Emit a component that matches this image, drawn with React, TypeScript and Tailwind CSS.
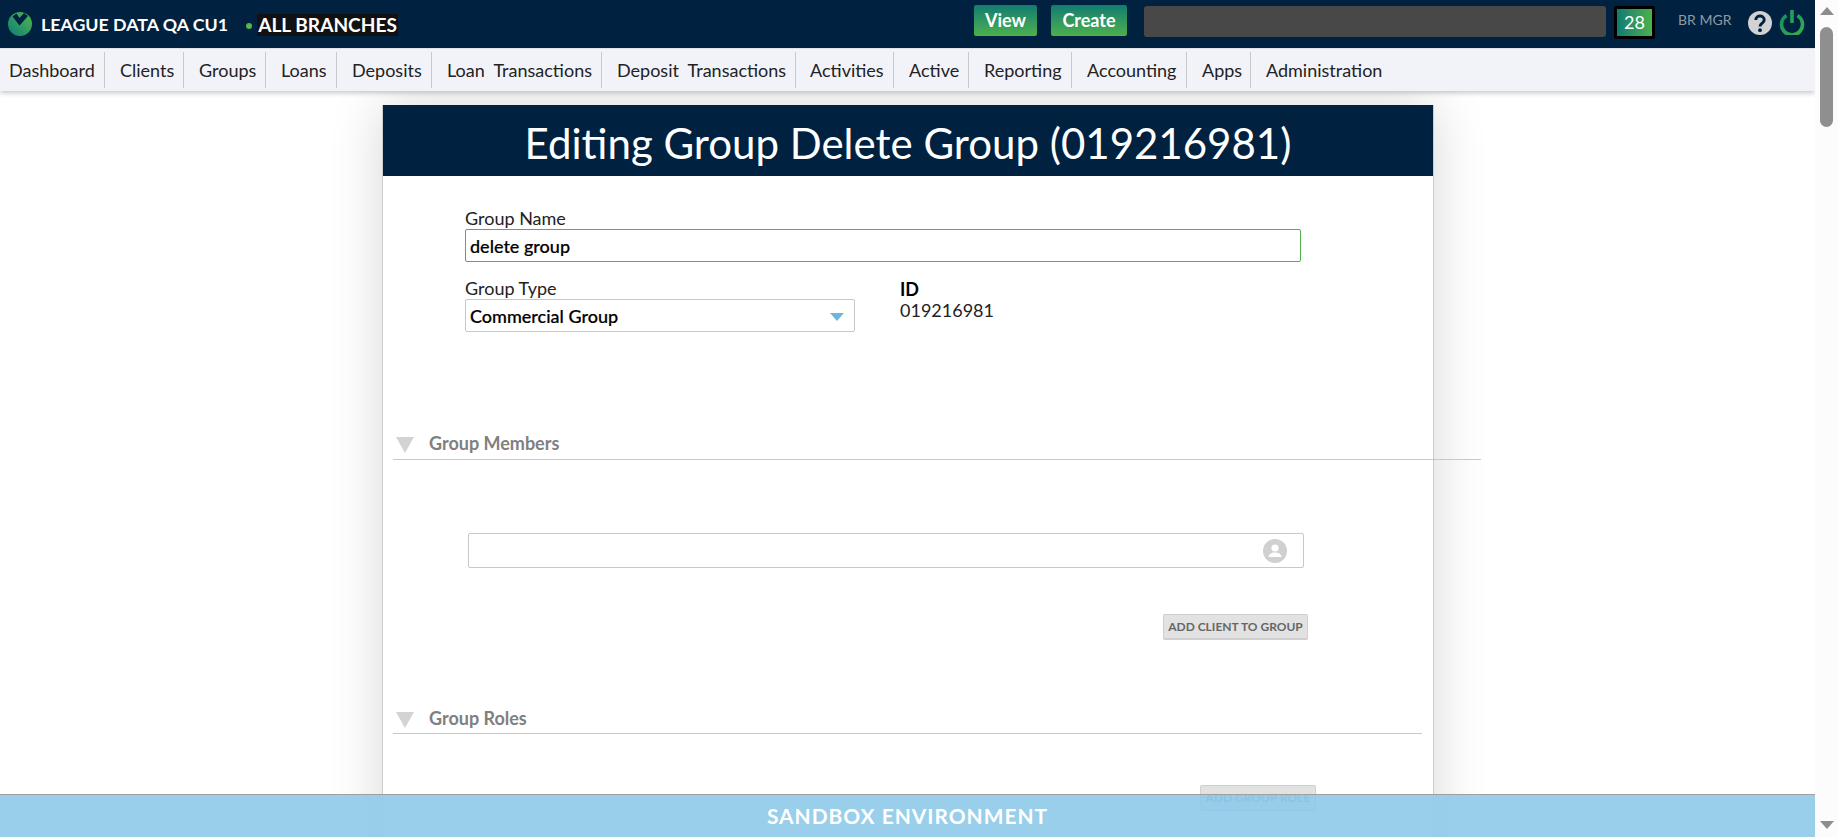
import React from "react";

const navItems: [string, string][] = [
  ["Dashboard", "w-[105px] pl-[9px]"],
  ["Clients", "w-[79px] pl-[15px]"],
  ["Groups", "w-[82px] pl-[15px]"],
  ["Loans", "w-[71px] pl-[15px]"],
  ["Deposits", "w-[95px] pl-[15px]"],
  ["Loan  Transactions", "w-[170px] pl-[15px]"],
  ["Deposit  Transactions", "w-[194px] pl-[15px]"],
  ["Activities", "w-[98px] pl-[14px]"],
  ["Active", "w-[75px] pl-[15px]"],
  ["Reporting", "w-[103px] pl-[15px]"],
  ["Accounting", "w-[115px] pl-[15px]"],
  ["Apps", "w-[64px] pl-[15px]"],
  ["Administration", "pl-[15px]"],
];

function Logo() {
  return (
    <svg width="24" height="26" viewBox="0 0 24 26" className="shrink-0">
      <defs>
        <linearGradient id="lg" x1="0" y1="1" x2="1" y2="0">
          <stop offset="0" stopColor="#0e7c7b" />
          <stop offset="1" stopColor="#52b848" />
        </linearGradient>
      </defs>
      <circle cx="12" cy="13" r="12" fill="url(#lg)" />
      <path d="M4.5 5.5 L11.5 14.5 L20 5 L16 2 L11.5 7 L8.5 2.5 Z" fill="#002240" />
    </svg>
  );
}

function Triangle() {
  return <span className="w-0 h-0 border-l-[9px] border-r-[9px] border-t-[16px] border-l-transparent border-r-transparent border-t-[#d3d3d3] mt-1" />;
}

function SectionHead({ title, lineClass }: { title: string; lineClass: string }) {
  return (
    <div className={`flex items-center h-[32px] pl-[3px] border-b border-[#c8c8c8] ${lineClass}`}>
      <Triangle />
      <span className="ml-[15px] text-[18px] font-bold text-[#808080] leading-none">{title}</span>
    </div>
  );
}

function GrayButton({ children, className }: { children: React.ReactNode; className: string }) {
  return (
    <button className={`h-[26px] flex items-center justify-center whitespace-nowrap rounded-[2px] bg-[#e2e2e2] border border-[#cfcfcf] border-b-2 text-[12px] font-bold text-[#666] ${className}`}>
      {children}
    </button>
  );
}

export default function App() {
  return (
    <div className="h-screen w-full flex overflow-hidden bg-white font-['Lato','Carlito','Liberation_Sans',sans-serif] relative">
      <div className="flex-1 min-w-0 flex flex-col relative overflow-hidden">
        <header className="h-[48px] shrink-0 bg-[#002240] flex items-center pl-[8px] relative z-20">
          <Logo />
          <span className="ml-[9px] text-[17.8px] font-bold text-white whitespace-nowrap">LEAGUE DATA QA CU1</span>
          <span className="ml-[18px] mt-[4px] w-[6px] h-[6px] rounded-full bg-[#52b848]" />
          <span className="ml-[5px] mt-[2px] px-[1px] h-[22px] flex items-center bg-[#111111] text-[19.1px] font-bold text-white whitespace-nowrap">ALL BRANCHES</span>
          <div className="ml-auto flex items-center">
            <button className="w-[63px] h-[31px] mb-[7px] rounded-[2px] bg-gradient-to-b from-[#0e7c6e] to-[#4cb04a] text-white font-bold text-[18px]">View</button>
            <button className="ml-[14px] w-[76px] h-[31px] mb-[7px] rounded-[2px] bg-gradient-to-b from-[#0e7c6e] to-[#4cb04a] text-white font-bold text-[18px]">Create</button>
            <div className="ml-[17px] w-[462px] h-[31px] mb-[5px] rounded-[3px] bg-[#484848]" />
            <div className="ml-[8px] w-[41px] h-[33px] mb-[3px] rounded-[2px] border-[3px] border-[#000] bg-gradient-to-r from-[#0e7c6e] to-[#4cb04a] text-white text-[18px] flex items-center justify-center">28</div>
            <span className="ml-[23px] w-[52px] mb-[10px] text-[14px] text-[#8f9aa5] whitespace-nowrap">BR MGR</span>
            <svg width="24" height="24" viewBox="0 0 24 24" className="ml-[18px] mb-[2px]" fill="none">
              <circle cx="12" cy="12" r="12" fill="#d2d2d2" />
              <path d="M7.8 9 C7.8 3.8 16.2 3.8 16.2 9 C16.2 12.2 12 12 12 15.5" stroke="#002240" strokeWidth="3" />
              <circle cx="12" cy="19.2" r="1.9" fill="#002240" />
            </svg>
            <svg width="26" height="26" viewBox="0 0 26 26" className="ml-[7px] mr-[10px] mb-[4px]" fill="none">
              <path d="M7.5 6.5 A10.5 10.5 0 1 0 18.5 6.5" stroke="url(#pw)" strokeWidth="3.6" />
              <path d="M13 1 V14" stroke="#22a05a" strokeWidth="3.6" />
              <defs>
                <linearGradient id="pw" x1="0" y1="0" x2="1" y2="1">
                  <stop offset="0" stopColor="#16905f" />
                  <stop offset="1" stopColor="#38ad4e" />
                </linearGradient>
              </defs>
            </svg>
          </div>
        </header>

        <nav className="h-[43px] shrink-0 bg-[#f2f3f9] border-t border-[#dfe3ea] flex items-center shadow-[0_2px_5px_rgba(0,0,0,0.22)] relative z-10">
          {navItems.map(([label, cls], i) => (
            <div
              key={label}
              className={`h-[36px] flex items-center text-[18px] text-[#222] whitespace-pre ${cls} ${i < navItems.length - 1 ? "border-r border-[#c9c9c9]" : ""}`}
            >
              {label}
            </div>
          ))}
        </nav>

        <main className="flex-1 min-h-0 overflow-hidden pt-[14px] pl-[382px]">
          <div className="w-[1052px] min-h-[900px] bg-white border-x border-[#cccccc] shadow-[0_0_50px_rgba(0,0,0,0.16)]">
            <h1 className="h-[71px] pt-[3px] bg-[#002240] text-white text-[42px] leading-[71px] text-center whitespace-nowrap">
              Editing Group Delete Group (019216981)
            </h1>

            <div className="pl-[82px] pt-[32px]">
              <label className="block text-[18px] leading-[20px] h-[21px] text-[#222]">Group Name</label>
              <div className="w-[836px] h-[33px] pt-[2px] border border-[#52b04f] rounded-[2px] flex items-center pl-[4px] text-[18px] font-medium text-black [-webkit-text-stroke:0.2px_black]">delete group</div>

              <div className="flex mt-[16px]">
                <div className="w-[390px]">
                  <label className="block text-[18px] leading-[20px] h-[21px] text-[#222]">Group Type</label>
                  <div className="h-[33px] pt-[2px] border border-[#c8c8c8] rounded-[2px] flex items-center pl-[4px] pr-[10px] justify-between text-[18px] font-medium text-black [-webkit-text-stroke:0.2px_black]">
                    Commercial Group
                    <span className="w-0 h-0 border-l-[7px] border-r-[7px] border-t-[8px] border-l-transparent border-r-transparent border-t-[#6db6dc]" />
                  </div>
                </div>
                <div className="ml-[45px] pt-[1px] text-[18px] leading-[21px] text-[#222]">
                  <div className="font-bold text-black">ID</div>
                  <div>019216981</div>
                </div>
              </div>
            </div>

            <div className="pl-[10px] mt-[95px]">
              <SectionHead title="Group Members" lineClass="w-[1088px] h-[33px]" />
            </div>

            <div className="pl-[85px] mt-[73px]">
              <div className="w-[836px] h-[35px] border border-[#c8c8c8] rounded-[2px] flex items-center justify-end pr-[16px]">
                <svg width="24" height="24" viewBox="0 0 24 24">
                  <circle cx="12" cy="12" r="12" fill="#d0d0d0" />
                  <circle cx="12" cy="9" r="3.6" fill="#fff" />
                  <path d="M5.5 18 C6 14.5 9 13.5 12 13.5 C15 13.5 18 14.5 18.5 18 Z" fill="#fff" />
                </svg>
              </div>
            </div>

            <div className="pl-[780px] mt-[46px]">
              <GrayButton className="w-[145px]">ADD CLIENT TO GROUP</GrayButton>
            </div>

            <div className="pl-[10px] mt-[62px]">
              <SectionHead title="Group Roles" lineClass="w-[1029px]" />
            </div>

            <div className="pl-[817px] mt-[51px]">
              <GrayButton className="w-[116px]">ADD GROUP ROLE</GrayButton>
            </div>
          </div>
        </main>

        <div className="absolute left-0 right-0 bottom-0 h-[43px] z-30 bg-[#90cbe9]/[0.92] border-t border-[#a0a0a0] flex items-center justify-center text-white font-bold text-[20.9px] tracking-[1px]">
          SANDBOX ENVIRONMENT
        </div>
      </div>

      <aside className="w-[23px] shrink-0 bg-[#fcfcfc] flex flex-col items-center relative">
        <span className="mt-[7px] w-0 h-0 border-l-[7px] border-r-[7px] border-b-[8px] border-l-transparent border-r-transparent border-b-[#8d8d8d]" />
        <div className="mt-[12px] w-[13px] h-[100px] rounded-full bg-[#8f8f8f]" />
        <span className="mt-auto mb-[8px] w-0 h-0 border-l-[7px] border-r-[7px] border-t-[8px] border-l-transparent border-r-transparent border-t-[#8d8d8d]" />
      </aside>
    </div>
  );
}
